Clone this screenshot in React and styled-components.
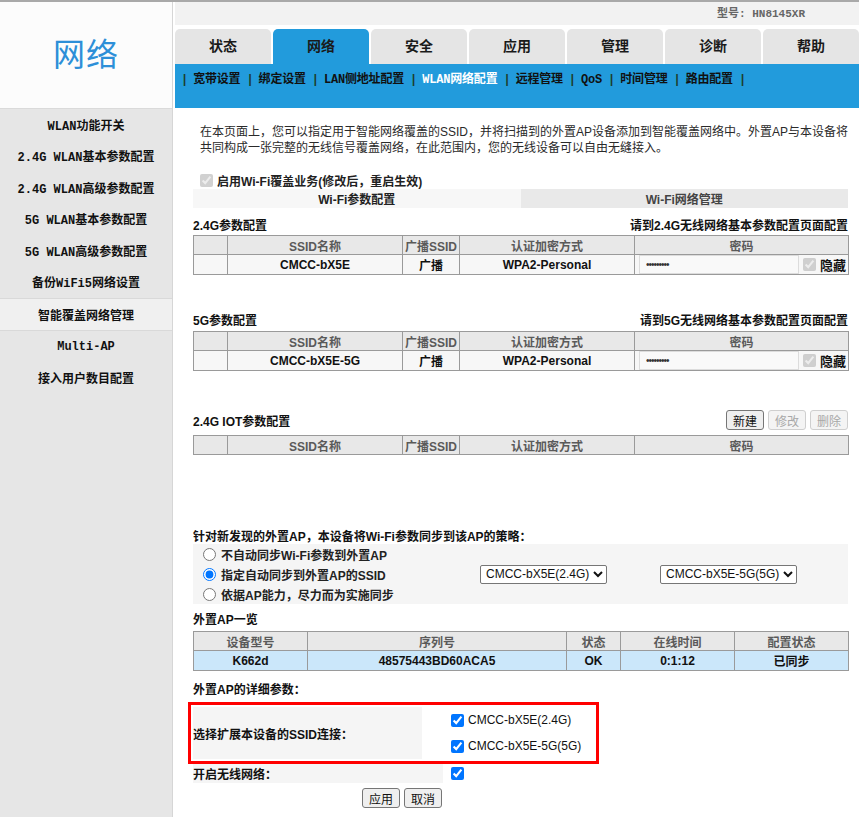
import React from 'react';
import styled, { createGlobalStyle } from 'styled-components';

const CN = `"Liberation Sans", "Noto Sans CJK SC", sans-serif`;
const MONO = `"Liberation Mono", "Noto Sans CJK SC", monospace`;
const BLUE = '#229bdc';

const GlobalStyle = createGlobalStyle`
  html, body {
    margin: 0;
    padding: 0;
    background: #fff;
    font-family: ${CN};
    font-size: 12px;
    color: #222;
  }
`;

const Page = styled.div`
  display: flex;
  border-top: 2px solid #a9a9a9;
  min-height: 815px;
  width: 859px;
  overflow: hidden;
`;

const LeftCol = styled.div`
  width: 172px;
  flex: none;
  display: flex;
  flex-direction: column;
  border-right: 1px solid #d6d6d6;
`;

const Logo = styled.div`
  height: 106px;
  box-sizing: border-box;
  padding-bottom: 6px;
  background: #fcfcfc;
  display: flex;
  align-items: center;
  justify-content: center;
  font-family: "Noto Sans CJK SC", sans-serif;
  font-size: 32px;
  color: #2d8fd8;
  letter-spacing: 1px;
`;

const Sidebar = styled.div`
  flex: 1;
  background: #e6e6e6;
  border-top: 1px solid #dadada;
`;

const SideItem = styled.div`
  height: ${({ $active }) => ($active ? 33 : 31.5)}px;
  display: flex;
  align-items: center;
  justify-content: center;
  font-family: ${MONO};
  font-size: 12px;
  font-weight: bold;
  color: #111;
  box-sizing: border-box;
  background: ${({ $active }) => ($active ? '#f0f0f0' : 'transparent')};
  border-top: 1px solid ${({ $active }) => ($active ? '#d9d9d9' : 'transparent')};
  border-bottom: 1px solid ${({ $active }) => ($active ? '#d9d9d9' : 'transparent')};
`;

const Main = styled.div`
  margin-left: 2px;
  flex: 1;
  min-width: 0;
  display: flex;
  flex-direction: column;
`;

const ModelBar = styled.div`
  height: 23px;
  box-sizing: border-box;
  padding: 0 54px 3px 0;
  background: #f2f2f2;
  display: flex;
  align-items: center;
  justify-content: flex-end;
  margin-bottom: 4px;
  font-family: ${MONO};
  font-size: 11px;
  font-weight: bold;
  color: #666;
`;

const Tabs = styled.div`
  display: flex;
  gap: 2px;
  height: 35px;
`;

const Tab = styled.div`
  flex: 1;
  display: flex;
  align-items: center;
  justify-content: center;
  padding-bottom: 3px;
  border-radius: 5px 5px 0 0;
  background: ${({ $active }) => ($active ? BLUE : '#e5e5e5')};
  font-family: "Noto Sans CJK SC", sans-serif;
  font-size: 14px;
  font-weight: bold;
  color: #1a1a1a;
`;

const SubNav = styled.div`
  height: 44px;
  background: ${BLUE};
  display: flex;
  align-items: flex-start;
  padding: 9px 0 0 6px;
  box-sizing: border-box;
  font-family: ${MONO};
  font-size: 12px;
  font-weight: bold;
  line-height: 14px;
  white-space: nowrap;
`;

const Sep = styled.span`
  color: #1d3d2d;
  margin-right: 5px;
`;

const SubLink = styled.span`
  color: ${({ $active }) => ($active ? '#fff' : '#111')};
  margin-right: 6px;
  letter-spacing: -0.2px;
`;

const Content = styled.div`
  padding: 0 11px 0 18px;
  display: flex;
  flex-direction: column;
`;

const Intro = styled.p`
  margin: 16px 0 0;
  padding-left: 7px;
  line-height: 16px;
  font-size: 12px;
  color: #2a2a2a;
  white-space: nowrap;
`;

const CheckRow = styled.label`
  margin-top: 15px;
  height: 18px;
  display: flex;
  align-items: center;
  padding-left: 7px;
  gap: 4px;
  font-weight: bold;
  color: #222;
`;

const Box = styled.input`
  margin: 0;
  width: 13px;
  height: 13px;
  flex: none;
`;

const Strip = styled.div`
  display: flex;
  height: 19px;
`;

const StripTab = styled.div`
  flex: 1;
  display: flex;
  align-items: center;
  justify-content: center;
  background: ${({ $active }) => ($active ? '#f7f7f7' : '#e9e9e9')};
  font-weight: bold;
  color: ${({ $active }) => ($active ? '#222' : '#444')};
`;

const SectionHead = styled.div`
  margin-top: ${({ $mt }) => $mt}px;
  display: flex;
  align-items: center;
  justify-content: space-between;
  min-height: ${({ $h }) => $h || 16}px;
  font-weight: bold;
  color: #111;
`;

const Buttons = styled.div`
  display: flex;
  gap: 4px;
`;

const Btn = styled.button`
  height: 20px;
  padding: 0 6px;
  font-family: ${CN};
  font-size: 12px;
  border-radius: 3px;
  border: 1px solid ${({ disabled }) => (disabled ? '#cfcfcf' : '#767676')};
  background: ${({ disabled }) => (disabled ? '#f4f4f4' : '#efefef')};
  color: ${({ disabled }) => (disabled ? '#a8a8a8' : '#111')};
`;

const Table = styled.table`
  margin-top: ${({ $mt }) => $mt}px;
  width: 655px;
  border-collapse: collapse;
  table-layout: fixed;
  border: 1px solid #9a9a9a;
`;

const Col = styled.col`
  width: ${({ $w }) => $w}px;
`;

const Th = styled.th`
  height: 18px;
  padding: 0;
  background: #e8e8e8;
  border: 1px solid #9a9a9a;
  font-weight: bold;
  color: #5a5a5a;
  text-align: center;
`;

const Td = styled.td`
  height: 19px;
  padding: 0;
  background: ${({ $bg }) => $bg || '#f7f7f7'};
  border: 1px solid #9a9a9a;
  text-align: center;
  font-weight: ${({ $bold }) => ($bold ? 'bold' : 'normal')};
  color: #111;
`;

const PwdCell = styled.div`
  display: flex;
  align-items: center;
  gap: 4px;
  padding-left: 4px;
`;

const Pwd = styled.input`
  width: 160px;
  height: 19px;
  box-sizing: border-box;
  border: 1px solid #dcdcdc;
  background: #f9f9f9;
  font-family: ${CN};
  font-size: 10px;
  letter-spacing: -1px;
  padding: 0 6px;
  color: #333;
`;

const HideLabel = styled.span`
  font-weight: bold;
  font-size: 13px;
`;

const EmptyGap = styled.div`
  height: 72px;
`;

const PolicyBox = styled.div`
  background: #f5f5f5;
  display: flex;
  flex-direction: column;
`;

const RadioRow = styled.label`
  height: 20px;
  display: grid;
  grid-template-columns: 287px 180px auto;
  align-items: center;
`;

const RadioLabel = styled.span`
  display: flex;
  align-items: center;
  gap: 5px;
  padding-left: 10px;
  font-weight: bold;
  color: #222;
`;

const Select = styled.select`
  height: 19px;
  padding: 0 0 0 1px;
  font-family: ${CN};
  font-size: 12px;
  border: 1px solid #767676;
  border-radius: 2px;
  background: #fff;
  color: #111;
  justify-self: start;
`;

const RedRow = styled.div`
  margin: 5px 0 0 -5px;
  width: 411px;
  height: 62px;
  box-sizing: border-box;
  border: 3px solid #f00;
  padding: 2px;
  display: flex;
`;

const LabelCell = styled.div`
  width: ${({ $w }) => $w}px;
  background: #f5f5f5;
  display: flex;
  align-items: center;
  font-weight: bold;
  color: #111;
  flex: none;
`;

const ChecksCell = styled.div`
  display: flex;
  flex-direction: column;
  justify-content: space-around;
  padding-left: 29px;
`;

const CheckItem = styled.label`
  display: flex;
  align-items: center;
  gap: 4px;
  color: #111;
`;

const PlainRow = styled.div`
  height: 19px;
  display: flex;
  align-items: stretch;
`;

const RowCheck = styled.div`
  display: flex;
  align-items: center;
  padding-left: 8px;
`;

const Actions = styled.div`
  margin-top: 5px;
  display: flex;
  gap: 4px;
  padding-left: 169px;
`;

const sideItems = [
  'WLAN功能开关',
  '2.4G WLAN基本参数配置',
  '2.4G WLAN高级参数配置',
  '5G WLAN基本参数配置',
  '5G WLAN高级参数配置',
  '备份WiFi5网络设置',
  '智能覆盖网络管理',
  'Multi-AP',
  '接入用户数目配置',
];

const tabs = ['状态', '网络', '安全', '应用', '管理', '诊断', '帮助'];
const subLinks = ['宽带设置', '绑定设置', 'LAN侧地址配置', 'WLAN网络配置', '远程管理', 'QoS', '时间管理', '路由配置'];

const ssidCols = [34, 175, 57, 175, 214];

const SsidTable = ({ mt, ssid, empty }) => (
  <Table $mt={mt}>
    <colgroup>
      {ssidCols.map((w, i) => <Col key={i} $w={w} />)}
    </colgroup>
    <thead>
      <tr>
        <Th />
        <Th>SSID名称</Th>
        <Th>广播SSID</Th>
        <Th>认证加密方式</Th>
        <Th>密码</Th>
      </tr>
    </thead>
    {!empty && (
      <tbody>
        <tr>
          <Td />
          <Td $bold>{ssid}</Td>
          <Td $bold>广播</Td>
          <Td $bold>WPA2-Personal</Td>
          <Td>
            <PwdCell>
              <Pwd type="password" defaultValue="123456789" readOnly />
              <Box type="checkbox" defaultChecked disabled />
              <HideLabel>隐藏</HideLabel>
            </PwdCell>
          </Td>
        </tr>
      </tbody>
    )}
  </Table>
);

const App = () => {
  return (
    <>
      <GlobalStyle />
      <Page>
        <LeftCol>
          <Logo>网络</Logo>
          <Sidebar>
            {sideItems.map((s) => (
              <SideItem key={s} $active={s === '智能覆盖网络管理'}>{s}</SideItem>
            ))}
          </Sidebar>
        </LeftCol>
        <Main>
          <ModelBar>型号: HN8145XR</ModelBar>
          <Tabs>
            {tabs.map((t) => (
              <Tab key={t} $active={t === '网络'}>{t}</Tab>
            ))}
          </Tabs>
          <SubNav>
            <Sep>|</Sep>
            {subLinks.map((l) => (
              <React.Fragment key={l}>
                <SubLink $active={l === 'WLAN网络配置'}>{l}</SubLink>
                <Sep>|</Sep>
              </React.Fragment>
            ))}
          </SubNav>
          <Content>
            <Intro>
              在本页面上，您可以指定用于智能网络覆盖的SSID，并将扫描到的外置AP设备添加到智能覆盖网络中。外置AP与本设备将
              <br />
              共同构成一张完整的无线信号覆盖网络，在此范围内，您的无线设备可以自由无缝接入。
            </Intro>
            <CheckRow>
              <Box type="checkbox" defaultChecked disabled />
              启用Wi-Fi覆盖业务(修改后，重启生效)
            </CheckRow>
            <Strip>
              <StripTab $active>Wi-Fi参数配置</StripTab>
              <StripTab>Wi-Fi网络管理</StripTab>
            </Strip>

            <SectionHead $mt={8}>
              <span>2.4G参数配置</span>
              <span>请到2.4G无线网络基本参数配置页面配置</span>
            </SectionHead>
            <SsidTable mt={2} ssid="CMCC-bX5E" />

            <SectionHead $mt={36}>
              <span>5G参数配置</span>
              <span>请到5G无线网络基本参数配置页面配置</span>
            </SectionHead>
            <SsidTable mt={3} ssid="CMCC-bX5E-5G" />

            <SectionHead $mt={39} $h={20}>
              <span>2.4G IOT参数配置</span>
              <Buttons>
                <Btn>新建</Btn>
                <Btn disabled>修改</Btn>
                <Btn disabled>删除</Btn>
              </Buttons>
            </SectionHead>
            <SsidTable mt={5} empty />

            <EmptyGap />
            <SectionHead $mt={0} $h={13}>
              <span>针对新发现的外置AP，本设备将Wi-Fi参数同步到该AP的策略：</span>
            </SectionHead>
            <PolicyBox>
              <RadioRow>
                <RadioLabel>
                  <Box type="radio" name="policy" />
                  不自动同步Wi-Fi参数到外置AP
                </RadioLabel>
              </RadioRow>
              <RadioRow>
                <RadioLabel>
                  <Box type="radio" name="policy" defaultChecked />
                  指定自动同步到外置AP的SSID
                </RadioLabel>
                <Select defaultValue="a">
                  <option value="a">CMCC-bX5E(2.4G)</option>
                </Select>
                <Select defaultValue="b">
                  <option value="b">CMCC-bX5E-5G(5G)</option>
                </Select>
              </RadioRow>
              <RadioRow>
                <RadioLabel>
                  <Box type="radio" name="policy" />
                  依据AP能力，尽力而为实施同步
                </RadioLabel>
              </RadioRow>
            </PolicyBox>

            <SectionHead $mt={6}>
              <span>外置AP一览</span>
            </SectionHead>
            <Table $mt={4}>
              <colgroup>
                {[114, 259, 54, 114, 114].map((w, i) => <Col key={i} $w={w} />)}
              </colgroup>
              <thead>
                <tr>
                  <Th>设备型号</Th>
                  <Th>序列号</Th>
                  <Th>状态</Th>
                  <Th>在线时间</Th>
                  <Th>配置状态</Th>
                </tr>
              </thead>
              <tbody>
                <tr>
                  <Td $bg="#cbe7fa" $bold>K662d</Td>
                  <Td $bg="#cbe7fa" $bold>48575443BD60ACA5</Td>
                  <Td $bg="#cbe7fa" $bold>OK</Td>
                  <Td $bg="#cbe7fa" $bold>0:1:12</Td>
                  <Td $bg="#cbe7fa" $bold>已同步</Td>
                </tr>
              </tbody>
            </Table>

            <SectionHead $mt={9}>
              <span>外置AP的详细参数：</span>
            </SectionHead>
            <RedRow>
              <LabelCell $w={229}>选择扩展本设备的SSID连接：</LabelCell>
              <ChecksCell>
                <CheckItem>
                  <Box type="checkbox" defaultChecked />
                  CMCC-bX5E(2.4G)
                </CheckItem>
                <CheckItem>
                  <Box type="checkbox" defaultChecked />
                  CMCC-bX5E-5G(5G)
                </CheckItem>
              </ChecksCell>
            </RedRow>
            <PlainRow>
              <LabelCell $w={250}>开启无线网络：</LabelCell>
              <RowCheck>
                <Box type="checkbox" defaultChecked />
              </RowCheck>
            </PlainRow>
            <Actions>
              <Btn>应用</Btn>
              <Btn>取消</Btn>
            </Actions>
          </Content>
        </Main>
      </Page>
    </>
  );
};

export default App;
